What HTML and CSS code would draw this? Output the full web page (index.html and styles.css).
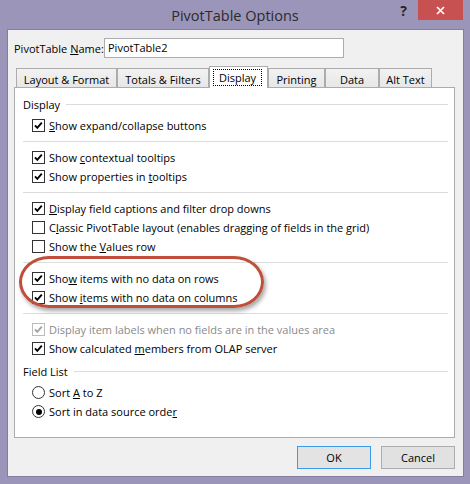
FILE: index.html
```html
<!DOCTYPE html>
<html>
<head>
<meta charset="utf-8">
<link rel="stylesheet" href="styles.css">
</head>
<body>
<div class="window">
  <div class="titlebar">
    <div></div>
    <div class="title">PivotTable Options</div>
    <div class="controls">
      <span class="help">?</span>
      <span class="close"><svg width="9" height="9" viewBox="0 0 9 9"><path d="M1 1 L8 8 M8 1 L1 8" stroke="#fff" stroke-width="1.7" fill="none"/></svg></span>
    </div>
  </div>
  <div class="client">
    <div class="name-row">
      <span class="name-label">PivotTable <u>N</u>ame:</span>
      <div class="textbox">PivotTable2</div>
    </div>
    <div class="tabs">
      <div class="tab t1">Layout &amp; Format</div>
      <div class="tab t2">Totals &amp; Filters</div>
      <div class="tab t3 selected"><span class="focus">Display</span></div>
      <div class="tab t4">Printing</div>
      <div class="tab t5">Data</div>
      <div class="tab t6">Alt Text</div>
    </div>
    <div class="panel">
      <div class="group-header"><span>Display</span><span class="rule"></span></div>
      <div class="row"><span class="cb"><svg width="11" height="11" viewBox="0 0 11 11"><polyline points="2,5.3 4.3,7.8 8.8,2.6" fill="none" stroke="#000" stroke-width="1.9"/></svg></span><span><u>S</u>how expand/collapse buttons</span></div>
      <div class="sep"></div>
      <div class="row"><span class="cb"><svg width="11" height="11" viewBox="0 0 11 11"><polyline points="2,5.3 4.3,7.8 8.8,2.6" fill="none" stroke="#000" stroke-width="1.9"/></svg></span><span>Show <u>c</u>ontextual tooltips</span></div>
      <div class="row"><span class="cb"><svg width="11" height="11" viewBox="0 0 11 11"><polyline points="2,5.3 4.3,7.8 8.8,2.6" fill="none" stroke="#000" stroke-width="1.9"/></svg></span><span>Show properties in <u>t</u>ooltips</span></div>
      <div class="sep"></div>
      <div class="row"><span class="cb"><svg width="11" height="11" viewBox="0 0 11 11"><polyline points="2,5.3 4.3,7.8 8.8,2.6" fill="none" stroke="#000" stroke-width="1.9"/></svg></span><span><u>D</u>isplay field captions and filter drop downs</span></div>
      <div class="row"><span class="cb"></span><span>C<u>l</u>assic PivotTable layout (enables dragging of fields in the grid)</span></div>
      <div class="row"><span class="cb"></span><span>Show the <u>V</u>alues row</span></div>
      <div class="sep"></div>
      <div class="highlight">
        <div class="row"><span class="cb"><svg width="11" height="11" viewBox="0 0 11 11"><polyline points="2,5.3 4.3,7.8 8.8,2.6" fill="none" stroke="#000" stroke-width="1.9"/></svg></span><span>Sho<u>w</u> items with no data on rows</span></div>
        <div class="row"><span class="cb"><svg width="11" height="11" viewBox="0 0 11 11"><polyline points="2,5.3 4.3,7.8 8.8,2.6" fill="none" stroke="#000" stroke-width="1.9"/></svg></span><span>Show <u>i</u>tems with no data on columns</span></div>
      </div>
      <div class="sep"></div>
      <div class="row disabled"><span class="cb"><svg width="11" height="11" viewBox="0 0 11 11"><polyline points="2,5.3 4.3,7.8 8.8,2.6" fill="none" stroke="#a3a3a3" stroke-width="1.9"/></svg></span><span>Display item labels when no fields are in the values area</span></div>
      <div class="row"><span class="cb"><svg width="11" height="11" viewBox="0 0 11 11"><polyline points="2,5.3 4.3,7.8 8.8,2.6" fill="none" stroke="#000" stroke-width="1.9"/></svg></span><span>Show calculated <u>m</u>embers from OLAP server</span></div>
      <div class="group-header second"><span>Field List</span><span class="rule"></span></div>
      <div class="row"><span class="rb"></span><span>Sort <u>A</u> to Z</span></div>
      <div class="row"><span class="rb on"></span><span>Sort in data source orde<u>r</u></span></div>
    </div>
    <div class="buttons">
      <button class="btn default">OK</button>
      <button class="btn">Cancel</button>
    </div>
  </div>
</div>
</body>
</html>
```
FILE: styles.css
```css
html, body {
  margin: 0;
  padding: 0;
  background: #9c95ba;
}
body {
  font-family: "Open Sans", "Noto Sans", sans-serif;
  font-size: 11px;
  color: #000;
}
.window {
  width: 470px;
  height: 484px;
  background: #9c95ba;
  display: flex;
  flex-direction: column;
  overflow: hidden;
}
.titlebar {
  height: 29px;
  flex: none;
  display: grid;
  grid-template-columns: 1fr auto 1fr;
}
.title {
  font-size: 14.5px;
  color: #2b2b2b;
  line-height: 29px;
  padding-top: 1px;
}
.controls {
  justify-self: end;
  display: flex;
  align-items: flex-start;
  gap: 11px;
  margin-right: 7px;
}
.help {
  font-weight: bold;
  font-size: 14px;
  line-height: 14px;
  color: #262626;
  margin-top: 4px;
}
.close {
  width: 45px;
  height: 20px;
  background: #c75050;
  display: flex;
  align-items: center;
  justify-content: center;
}
.client {
  flex: 1;
  margin: 0 6px 7px 7px;
  border: 1px solid #837d9f;
  background: #f0f0f0;
  display: flex;
  flex-direction: column;
  padding: 8px 8px 0 6px;
}
.name-row {
  display: flex;
  height: 20px;
  align-items: center;
}
.name-label {
  width: 90px;
}
.textbox {
  width: 240px;
  height: 20px;
  box-sizing: border-box;
  border: 1px solid #abadb3;
  background: #fff;
  padding-left: 3px;
  line-height: 18px;
}
.tabs {
  display: flex;
  align-items: flex-end;
  height: 22px;
  margin: 8px 0 -1px 2px;
}
.tab {
  box-sizing: border-box;
  height: 20px;
  border: 1px solid #acacac;
  border-bottom: none;
  background: linear-gradient(#f2f2f2, #e6e6e6);
  text-align: center;
  line-height: 19px;
  padding-top: 1px;
  white-space: nowrap;
}
.t1 { width: 101px; }
.t2 { width: 92px; }
.t3 { width: 59px; }
.t4 { width: 57px; }
.t5 { width: 54px; }
.t6 { width: 53px; }
.tab.selected {
  height: 22px;
  background: #fff;
  position: relative;
  z-index: 1;
  padding-top: 0;
}
.focus {
  display: block;
  border: 1px dotted #000;
  margin: 2px 5px 0 3px;
  height: 15px;
  line-height: 15px;
}
.panel {
  height: 351px;
  box-sizing: border-box;
  border: 1px solid #acacac;
  background: #fff;
  padding: 7px 6px 0 8px;
}
.group-header {
  display: flex;
  align-items: center;
  gap: 6px;
  height: 18px;
  margin-bottom: 3px;
}
.group-header.second {
  margin-top: 4px;
}
.rule {
  flex: 1;
  height: 1px;
  background: #dcdcdc;
}
.row {
  display: flex;
  align-items: center;
  gap: 4px;
  height: 19px;
  padding-left: 9px;
  white-space: nowrap;
}
.cb {
  width: 13px;
  height: 13px;
  box-sizing: border-box;
  border: 1px solid #333;
  background: #fff;
  display: flex;
  align-items: center;
  justify-content: center;
  flex: none;
}
.cb svg { display: block; }
.row.disabled { color: #8a8a8a; }
.row.disabled .cb { border-color: #bcbcbc; }
.rb {
  width: 13px;
  height: 13px;
  box-sizing: border-box;
  border: 1px solid #333;
  border-radius: 50%;
  background: #fff;
  display: flex;
  align-items: center;
  justify-content: center;
  flex: none;
}
.rb.on::after {
  content: "";
  width: 6px;
  height: 6px;
  border-radius: 50%;
  background: #000;
}
.sep {
  height: 1px;
  background: #dcdcdc;
  margin: 6px 0;
}
.highlight {
  position: relative;
}
.highlight::before {
  content: "";
  position: absolute;
  left: -4px;
  top: -13px;
  width: 245px;
  height: 52px;
  box-sizing: border-box;
  border: 3px solid #bf4e3a;
  border-radius: 30px / 26px;
  box-shadow: 2px 3px 4px rgba(0, 0, 0, 0.35);
  pointer-events: none;
}
.buttons {
  display: flex;
  justify-content: flex-end;
  gap: 10px;
  margin-top: 8px;
}
.btn {
  width: 74px;
  height: 23px;
  box-sizing: border-box;
  border: 1px solid #adadad;
  background: #e1e1e1;
  font-family: inherit;
  font-size: 11px;
  color: #000;
  padding: 0;
}
.btn.default {
  border-color: #3c9be8;
  background: #e5f1fb;
  background: #e3e3e3;
}
```
